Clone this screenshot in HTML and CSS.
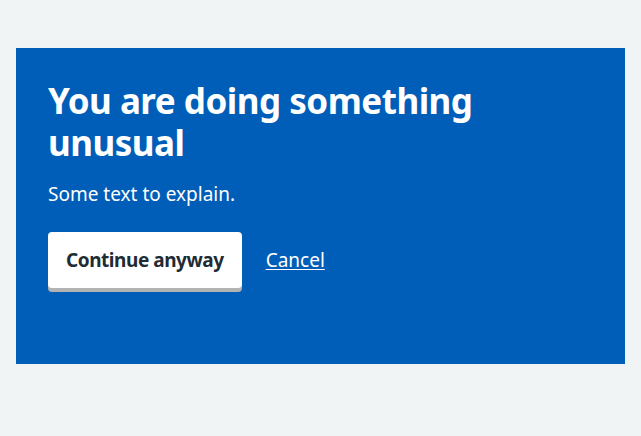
FILE: index.html
```html
<!DOCTYPE html>
<html lang="en">
<head>
<meta charset="utf-8">
<title>Interruption</title>
<link rel="stylesheet" href="styles.css">
</head>
<body>
<main class="page">
  <div class="panel">
    <h1 class="panel-title">You are doing something unusual</h1>
    <p class="panel-text">Some text to explain.</p>
    <div class="button-group">
      <a class="button" href="#">Continue anyway</a>
      <a class="link" href="#">Cancel</a>
    </div>
  </div>
</main>
</body>
</html>
```

FILE: styles.css
```css
html, body {
  margin: 0;
  padding: 0;
  background: #f0f4f5;
}
body {
  font-family: "Noto Sans", "Open Sans", sans-serif;
  color: #212b32;
}
.page {
  padding: 48px 16px 0;
}
.panel {
  background: #005eb8;
  color: #ffffff;
  padding: 32px 32px 76px;
}
.panel-title {
  margin: 0 0 16px;
  font-size: 35px;
  line-height: 42px;
  font-weight: 700;
  letter-spacing: -0.5px;
  max-width: 450px;
}
.panel-text {
  margin: 0 0 24px;
  font-size: 19px;
  line-height: 28px;
}
.button-group {
  display: flex;
  align-items: center;
  gap: 24px;
}
.button {
  display: inline-block;
  background: #ffffff;
  color: #212b32;
  font-size: 19px;
  line-height: 28px;
  font-weight: 700;
  letter-spacing: -0.45px;
  padding: 12px 16px;
  border: 2px solid transparent;
  border-radius: 4px;
  box-shadow: 0 4px 0 #b3b3b3;
  text-decoration: none;
}
.link {
  color: #ffffff;
  font-size: 19px;
  line-height: 28px;
  text-decoration: underline;
  text-underline-offset: 2px;
}
```
